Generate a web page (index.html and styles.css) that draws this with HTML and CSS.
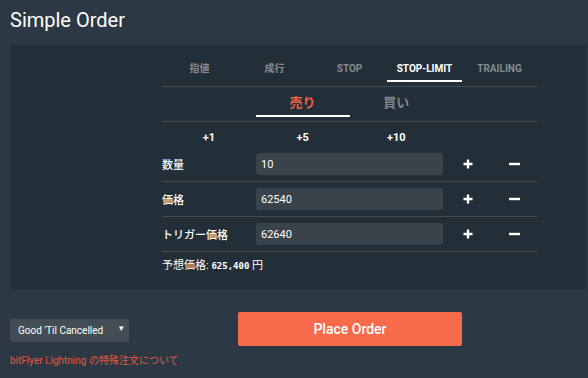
FILE: index.html
```html
<!doctype html>
<html lang="ja">
    <head>
        <meta charset="UTF-8" />
        <meta name="viewport" content="width=device-width, initial-scale=1.0" />
        <title>Simple Order</title>
        <link rel="stylesheet" href="styles.css">
    </head>
    <body>
        <h1 class="title">Simple Order</h1>

        <div class="panel">
            <div class="order-form">
                <div class="order-types">
                    <div class="type-tab">指値</div>
                    <div class="type-tab">成行</div>
                    <div class="type-tab">STOP</div>
                    <div class="type-tab active">STOP-LIMIT</div>
                    <div class="type-tab">TRAILING</div>
                </div>

                <div class="sides">
                    <div></div>
                    <div class="side-tab sell active">売り</div>
                    <div class="side-tab buy">買い</div>
                    <div></div>
                </div>

                <div class="increments">
                    <span>+1</span>
                    <span>+5</span>
                    <span>+10</span>
                </div>

                <div class="field-row">
                    <label for="qty">数量</label>
                    <input id="qty" type="text" value="10">
                    <button class="step" aria-label="plus">
                        <svg width="10" height="10" viewBox="0 0 10 10"><path d="M5 0.5v9M0.5 5h9" stroke="#fff" stroke-width="2.4"/></svg>
                    </button>
                    <button class="step" aria-label="minus">
                        <svg width="11" height="10" viewBox="0 0 11 10"><path d="M0 5h11" stroke="#fff" stroke-width="2.4"/></svg>
                    </button>
                </div>

                <div class="field-row">
                    <label for="price">価格</label>
                    <input id="price" type="text" value="62540">
                    <button class="step" aria-label="plus">
                        <svg width="10" height="10" viewBox="0 0 10 10"><path d="M5 0.5v9M0.5 5h9" stroke="#fff" stroke-width="2.4"/></svg>
                    </button>
                    <button class="step" aria-label="minus">
                        <svg width="11" height="10" viewBox="0 0 11 10"><path d="M0 5h11" stroke="#fff" stroke-width="2.4"/></svg>
                    </button>
                </div>

                <div class="field-row">
                    <label for="trigger">トリガー価格</label>
                    <input id="trigger" type="text" value="62640">
                    <button class="step" aria-label="plus">
                        <svg width="10" height="10" viewBox="0 0 10 10"><path d="M5 0.5v9M0.5 5h9" stroke="#fff" stroke-width="2.4"/></svg>
                    </button>
                    <button class="step" aria-label="minus">
                        <svg width="11" height="10" viewBox="0 0 11 10"><path d="M0 5h11" stroke="#fff" stroke-width="2.4"/></svg>
                    </button>
                </div>

                <div class="estimate">
                    予想価格: <span class="estimate-value">625,400</span> 円
                </div>
            </div>
        </div>

        <div class="footer">
            <div class="select-wrap">
                <select class="tif">
                    <option selected>Good 'Til Cancelled</option>
                    <option>Fill or Kill</option>
                    <option>Immediate or Cancel</option>
                </select>
            </div>
            <button class="place-order">Place Order</button>
            <a class="special-link" href="#">bitFlyer Lightning の特殊注文について</a>
        </div>
    </body>
</html>
```

FILE: styles.css
```css
* {
    margin: 0;
    padding: 0;
    box-sizing: border-box;
}

body {
    font-family: Roboto, "Noto Sans CJK JP", sans-serif;
    background: #2c3844;
    color: #fff;
    width: 588px;
    height: 378px;
    overflow: hidden;
}

.title {
    height: 45px;
    padding: 5px 10px 0;
    font-size: 20px;
    font-weight: 400;
    line-height: 30px;
}

.panel {
    height: 244px;
    margin: 0 2px 0 10px;
    background: #232f38;
    padding: 15px 0 0 152px;
}

.order-form {
    width: 375px;
}

.order-types {
    display: grid;
    grid-template-columns: repeat(5, 1fr);
    padding-bottom: 4px;
    border-bottom: 1px solid #434c53;
}

.type-tab {
    padding: 2px 0 4px;
    line-height: 14px;
    font-size: 10px;
    font-weight: 700;
    color: #858b90;
    text-align: center;
    border-bottom: 2px solid transparent;
}

.type-tab.active {
    color: #fff;
    border-bottom-color: #fff;
}

.sides {
    display: grid;
    grid-template-columns: repeat(4, 1fr);
    padding-bottom: 4px;
    border-bottom: 1px solid #434c53;
}

.side-tab {
    padding: 7px 0 3px;
    line-height: 18px;
    font-size: 13px;
    font-weight: 700;
    color: #7f868b;
    text-align: center;
    border-bottom: 2px solid transparent;
}

.side-tab.sell.active {
    color: #ee6240;
    border-bottom-color: #fff;
}

.increments {
    display: grid;
    grid-template-columns: repeat(4, 1fr);
    padding: 8px 0 1px;
    line-height: 16px;
    font-size: 11px;
    font-weight: 700;
    text-align: center;
}

.field-row {
    display: grid;
    grid-template-columns: 94px 188px 47px 46px;
    align-items: center;
    padding: 6px 0;
    border-bottom: 1px solid #434c53;
}

.field-row label {
    font-size: 11px;
    font-weight: 500;
}

.field-row input {
    width: 187px;
    height: 22px;
    padding: 0 5px;
    border: none;
    border-radius: 2px;
    background: #394349;
    color: #fff;
    font-family: Roboto, sans-serif;
    font-size: 11px;
    outline: none;
}

.step {
    display: flex;
    justify-content: center;
    align-items: center;
    height: 22px;
    border: none;
    background: none;
    cursor: pointer;
}

.estimate {
    padding-top: 6px;
    line-height: 16px;
    font-size: 11px;
}

.estimate-value {
    font-family: "DejaVu Sans Mono", monospace;
    font-size: 9px;
    font-weight: 700;
}

.footer {
    display: grid;
    grid-template-columns: 228px 224px;
    padding: 23px 10px 0;
}

.select-wrap {
    position: relative;
    width: 119px;
    height: 23px;
    margin-top: 7px;
}

.select-wrap::after {
    content: "\25BE";
    position: absolute;
    right: 5px;
    top: 4px;
    font-size: 9px;
    color: #fff;
    pointer-events: none;
}

.tif {
    appearance: none;
    width: 100%;
    height: 100%;
    padding: 0 0 0 8px;
    border: none;
    border-radius: 2px;
    background: #434e54;
    color: #fff;
    font-family: Roboto, sans-serif;
    font-size: 10px;
}

.place-order {
    height: 34px;
    border: none;
    border-radius: 2px;
    background: #f76a4c;
    color: #fff;
    font-family: Roboto, sans-serif;
    font-size: 14px;
    font-weight: 500;
    cursor: pointer;
}

.special-link {
    grid-column: 1 / 3;
    margin-top: 8px;
    line-height: 14px;
    font-size: 10px;
    color: #e35a3e;
    text-decoration: none;
}
```
